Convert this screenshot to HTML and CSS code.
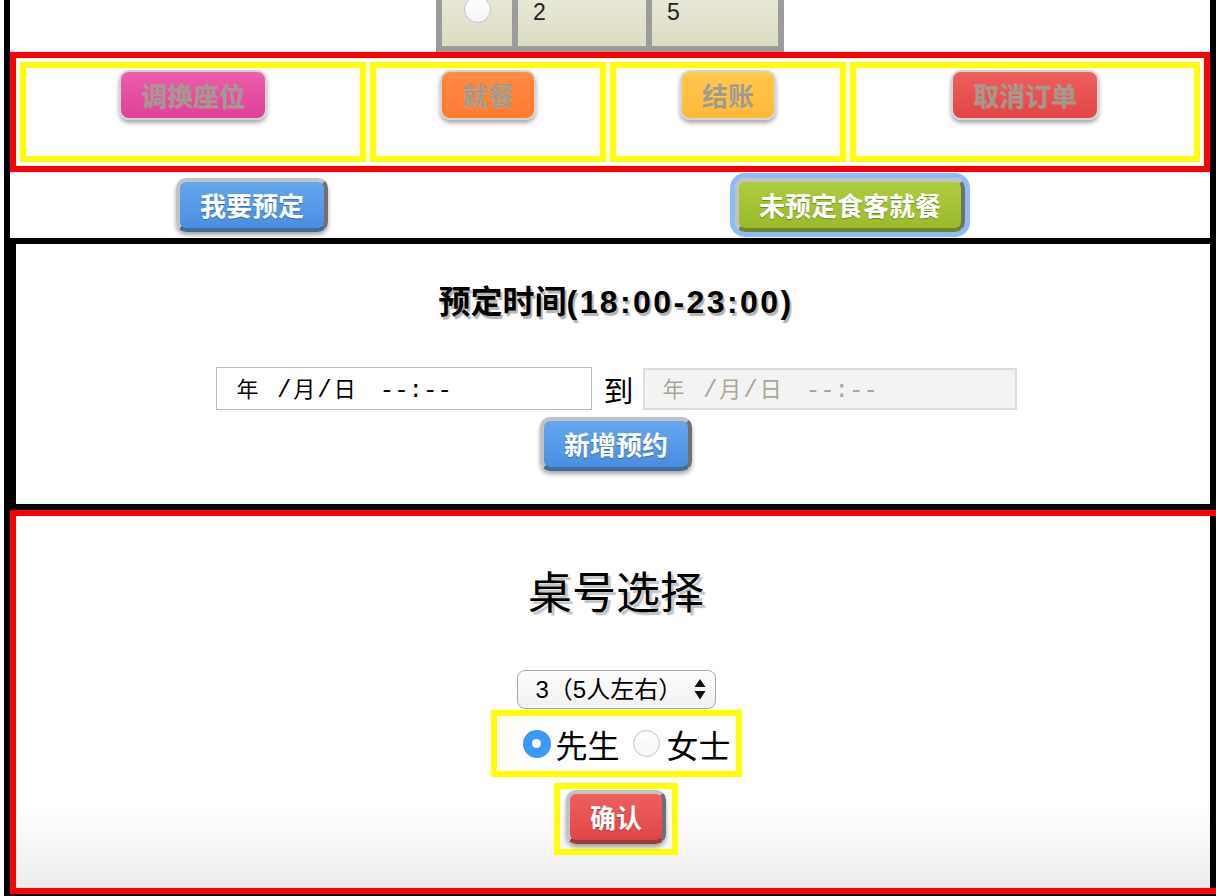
FILE: index.html
```html
<!DOCTYPE html>
<html lang="zh-CN">
<head>
<meta charset="utf-8">
<title>餐厅预定</title>
<link rel="stylesheet" href="styles.css">
</head>
<body>
<div class="page">
  <table class="seats">
    <tr>
      <td class="c-radio"><span class="radio"></span></td>
      <td class="c-a">2</td>
      <td class="c-b">5</td>
    </tr>
  </table>

  <div class="ops">
    <div class="slot"><button class="btn off pink" disabled>调换座位</button></div>
    <div class="slot"><button class="btn off orange" disabled>就餐</button></div>
    <div class="slot"><button class="btn off amber" disabled>结账</button></div>
    <div class="slot"><button class="btn off red" disabled>取消订单</button></div>
  </div>

  <div class="actions">
    <button class="btn blue b-reserve">我要预定</button>
    <button class="btn green b-walkin">未预定食客就餐</button>
  </div>

  <section class="reserve">
    <h2 class="r-title">预定时间<span class="lat">(18:00-23:00)</span></h2>
    <div class="range">
      <div class="dt"><span class="val"><span class="cj">年</span> /<span class="cj">月</span>/<span class="cj">日</span><span class="tm">--:--</span></span></div>
      <span class="to">到</span>
      <div class="dt dis"><span class="val"><span class="cj">年</span> /<span class="cj">月</span>/<span class="cj">日</span><span class="tm">--:--</span></span></div>
    </div>
    <button class="btn blue add">新增预约</button>
  </section>

  <section class="tables">
    <h2 class="t-title">桌号选择</h2>
    <div class="select">
      <span class="sel-text">3（5人左右）</span>
      <svg class="sel-arrows" width="12" height="21" viewBox="0 0 12 21"><path d="M6 0 L11.5 8 L0.5 8 Z M0.5 12 L11.5 12 L6 20.5 Z" fill="#111"/></svg>
    </div>
    <div class="genders">
      <span class="radio on"></span><span class="g-label">先生</span>
      <span class="radio off-r"></span><span class="g-label">女士</span>
    </div>
    <div class="confirm">
      <button class="btn red">确认</button>
    </div>
  </section>
</div>
</body>
</html>
```

FILE: styles.css
```css
html, body {
  margin: 0;
  padding: 0;
  overflow: hidden;
  background: #fff;
}

body {
  font-family: "Noto Sans CJK SC", sans-serif;
  color: #000;
}

.page {
  margin: -30px 0 0 4px;
  width: 1212px;
  box-sizing: border-box;
  border: 6px solid #000;
}

/* seat table (partly scrolled out) */
.seats {
  margin: 0 auto;
  width: 348px;
  border-collapse: separate;
  border-spacing: 6px;
  background: #9c9c9c;
}

.seats tr {
  height: 64px;
}

.seats td {
  box-sizing: border-box;
  padding: 17px 0 0 15px;
  vertical-align: top;
  background: linear-gradient(#ececde, #dcdcc4);
  font: 23px/26px "Liberation Sans", sans-serif;
  color: #222;
}

.seats td.c-radio {
  width: 70px;
  padding: 14px 0 0;
}

.seats td.c-a {
  width: 128px;
}

.seats td.c-b {
  width: 126px;
}

.radio {
  display: block;
  width: 27px;
  height: 27px;
  box-sizing: border-box;
  border-radius: 50%;
  border: 1px solid #c3c3c3;
  background: linear-gradient(#ffffff, #f5f5f5);
  box-shadow: inset 0 1px 1px rgba(0, 0, 0, 0.04);
}

.c-radio .radio {
  margin: 0 auto;
}

/* operations box */
.ops {
  display: grid;
  grid-template-columns: 346px 236px 236px 350px;
  column-gap: 4px;
  padding: 4px;
  border: 6px solid #ff0000;
}

.slot {
  height: 100px;
  box-sizing: border-box;
  border: 6px solid #ffff00;
  padding-top: 2px;
  text-align: center;
}

/* buttons */
.btn {
  margin: 0;
  font: 700 26px/30px "Noto Sans CJK SC", sans-serif;
  padding: 8px 20px;
  border-radius: 10px;
  border: 4px solid;
  border-color: #c2c2c2 #707070 rgba(0, 0, 0, 0.35) #c2c2c2;
  color: #fff;
  text-shadow: 0 1px 1px rgba(0, 0, 0, 0.3);
  box-shadow: 0 3px 4px rgba(0, 0, 0, 0.35);
  vertical-align: top;
  cursor: pointer;
}

.btn.off {
  border: 2px solid #d4d4d4;
  padding: 8px 20px;
  color: #a19b8e;
  text-shadow: 1px 1px 0 rgba(255, 255, 255, 0.12);
  cursor: default;
}

.pink {
  background: linear-gradient(#ec5eab, #de4198);
}

.orange {
  background: linear-gradient(#ff8d44, #ff792c);
}

.amber {
  background: linear-gradient(#ffc953, #ffb834);
}

.red {
  background: linear-gradient(#ee5f5f, #e14646);
}

.blue {
  background: linear-gradient(#65a7ee, #4a8ee0);
}

.green {
  background: linear-gradient(#afcc3f, #99bb2b);
}

/* action row */
.actions {
  display: flex;
  align-items: center;
  height: 66px;
}

.b-reserve {
  margin-left: 166px;
}

.b-walkin {
  margin-left: 407px;
  box-shadow: 0 0 0 5px #8dbdf7, 0 3px 4px rgba(0, 0, 0, 0.35);
}

/* reservation section */
.reserve {
  margin-right: -6px;
  border: 6px solid #000;
  border-right: 0;
  height: 260px;
  display: flex;
  flex-direction: column;
  align-items: center;
}

.r-title {
  margin: 37px 0 0;
  font: 700 32px/37px "Noto Sans CJK SC", sans-serif;
  color: #000;
  text-shadow: 2px 3px 1px #b3b3b3;
}

.r-title .lat {
  font-family: "Liberation Sans", sans-serif;
  letter-spacing: 2.4px;
}

.range {
  margin-top: 46px;
  display: flex;
  align-items: center;
  height: 43px;
}

.dt {
  width: 376px;
  height: 43px;
  box-sizing: border-box;
  border: 1px solid #bebebe;
  background: #fff;
  padding-left: 20px;
  display: flex;
  align-items: center;
  font: 24px/30px "Liberation Mono", monospace;
  letter-spacing: 2px;
  color: #000;
}

.dt .cj {
  font: 22px "Noto Sans CJK SC", sans-serif;
}

.dt .tm {
  margin-left: 22px;
  letter-spacing: 0;
}

.dt.dis {
  width: 374px;
  height: 42px;
  border: 2px solid #dcdcdc;
  background: #f3f3f3;
  color: #aba596;
  padding-left: 18px;
}

.to {
  margin: 0 9px 0 12px;
  font: 30px/40px "Noto Sans CJK SC", sans-serif;
}

.add {
  margin-top: 7px;
}

/* table choice section */
.tables {
  margin-right: -6px;
  border: 6px solid #ff0000;
  border-right: 0;
  height: 372px;
  display: flex;
  flex-direction: column;
  align-items: center;
  background: linear-gradient(#ffffff 0%, #ffffff 78%, #f8f8f8 87%, #ebebeb 100%) no-repeat;
  background-size: calc(100% - 6px) 100%;
}

.t-title {
  margin: 48px 0 0;
  font: 400 44px/52px "Noto Sans CJK SC", sans-serif;
  color: #000;
  text-shadow: 3px 3px 1px #c4c4c4;
}

.select {
  margin-top: 54px;
  width: 199px;
  height: 39px;
  box-sizing: border-box;
  border: 1px solid #a8a8a8;
  border-radius: 8px;
  background: linear-gradient(#fdfdfd, #f1f1f1);
  display: flex;
  align-items: center;
  justify-content: space-between;
  padding: 0 9px 0 18px;
  font: 24px/28px "Liberation Sans", "Noto Sans CJK SC", sans-serif;
  color: #000;
}

.genders {
  margin-top: 1px;
  width: 251px;
  height: 67px;
  box-sizing: border-box;
  border: 6px solid #ffff00;
  padding: 0 5px 0 26px;
  display: flex;
  align-items: center;
  font: 32px/40px "Noto Sans CJK SC", sans-serif;
}

.radio.on {
  width: 28px;
  height: 28px;
  border: 0;
  background: #3b99fc;
  display: flex;
  align-items: center;
  justify-content: center;
  margin-right: 5px;
}

.radio.on::after {
  content: "";
  width: 9px;
  height: 9px;
  border-radius: 50%;
  background: #fff;
}

.radio.off-r {
  margin: 0 7px 0 13px;
}

.confirm {
  margin-top: 6px;
  width: 124px;
  height: 72px;
  box-sizing: border-box;
  border: 6px solid #ffff00;
  padding: 1px 0 0 6px;
}
```
